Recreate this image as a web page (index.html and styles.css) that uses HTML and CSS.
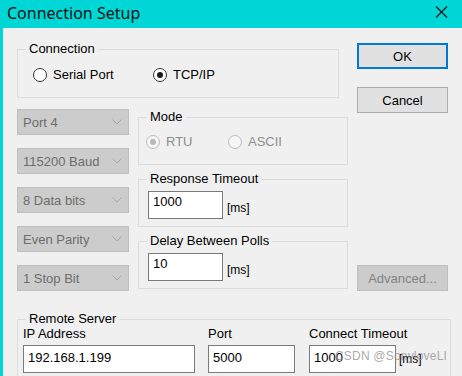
FILE: index.html
```html
<!DOCTYPE html>
<html lang="en">
<head>
    <meta charset="UTF-8">
    <title>Connection Setup</title>
    <link rel="stylesheet" href="styles.css">
</head>
<body>
    <div class="window">
        <!-- title bar -->
        <div class="titlebar">
            <span class="title">Connection Setup</span>
            <svg class="close" width="13" height="12" viewBox="0 0 13 12">
                <path d="M1 0.5 L12 11.5 M12 0.5 L1 11.5" stroke="#111" stroke-width="1.1" fill="none"/>
            </svg>
        </div>

        <div class="dialog">
            <div class="top">
                <div class="main">
                    <fieldset class="group group-connection">
                        <legend>Connection</legend>
                        <div class="radio-row">
                            <span class="radio-item item-serial"><span class="radio"></span>Serial Port</span>
                            <span class="radio-item"><span class="radio checked"></span>TCP/IP</span>
                        </div>
                    </fieldset>

                    <div class="settings">
                        <!-- serial options (disabled) -->
                        <div class="combos">
                            <div class="combo">Port 4<svg class="chevron" width="10" height="6" viewBox="0 0 10 6"><path d="M0.5 0.5 L5 5 L9.5 0.5" stroke="#a6a6a6" fill="none"/></svg></div>
                            <div class="combo">115200 Baud<svg class="chevron" width="10" height="6" viewBox="0 0 10 6"><path d="M0.5 0.5 L5 5 L9.5 0.5" stroke="#a6a6a6" fill="none"/></svg></div>
                            <div class="combo">8 Data bits<svg class="chevron" width="10" height="6" viewBox="0 0 10 6"><path d="M0.5 0.5 L5 5 L9.5 0.5" stroke="#a6a6a6" fill="none"/></svg></div>
                            <div class="combo">Even Parity<svg class="chevron" width="10" height="6" viewBox="0 0 10 6"><path d="M0.5 0.5 L5 5 L9.5 0.5" stroke="#a6a6a6" fill="none"/></svg></div>
                            <div class="combo">1 Stop Bit<svg class="chevron" width="10" height="6" viewBox="0 0 10 6"><path d="M0.5 0.5 L5 5 L9.5 0.5" stroke="#a6a6a6" fill="none"/></svg></div>
                        </div>

                        <div class="groups">
                            <fieldset class="group group-mode">
                                <legend>Mode</legend>
                                <div class="radio-row">
                                    <span class="radio-item item-rtu disabled"><span class="radio checked"></span>RTU</span>
                                    <span class="radio-item disabled"><span class="radio"></span>ASCII</span>
                                </div>
                            </fieldset>

                            <fieldset class="group group-field">
                                <legend>Response Timeout</legend>
                                <div class="field-row">
                                    <div class="edit edit-small">1000</div>
                                    <span class="unit">[ms]</span>
                                </div>
                            </fieldset>

                            <fieldset class="group group-field">
                                <legend>Delay Between Polls</legend>
                                <div class="field-row">
                                    <div class="edit edit-small">10</div>
                                    <span class="unit">[ms]</span>
                                </div>
                            </fieldset>
                        </div>
                    </div>
                </div>

                <!-- dialog buttons -->
                <div class="side">
                    <button class="btn btn-default">OK</button>
                    <button class="btn btn-cancel">Cancel</button>
                    <button class="btn btn-advanced" disabled>Advanced...</button>
                </div>
            </div>

            <fieldset class="group group-remote">
                <legend>Remote Server</legend>
                <div class="remote-grid">
                    <div class="remote-field">
                        <span class="field-label">IP Address</span>
                        <div class="edit edit-ip">192.168.1.199</div>
                    </div>
                    <div class="remote-field">
                        <span class="field-label">Port</span>
                        <div class="edit edit-port">5000</div>
                    </div>
                    <div class="remote-field">
                        <span class="field-label">Connect Timeout</span>
                        <div class="field-row">
                            <div class="edit edit-port">1000</div>
                            <span class="unit">[ms]</span>
                        </div>
                    </div>
                </div>
            </fieldset>
        </div>

        <div class="watermark">CSDN @SonyloveLI</div>
    </div>
</body>
</html>
```

FILE: styles.css
```css
body {
    margin: 0;
    font-family: "Liberation Sans", Arial, sans-serif;
    font-size: 13px;
    color: #000;
}

.window {
    position: relative;
    width: 462px;
    height: 376px;
    overflow: hidden;
    background: #f0f0f0;
}

.titlebar {
    height: 28px;
    background: #00d6d6;
    display: flex;
    align-items: center;
    justify-content: space-between;
    padding: 0 14px 0 7px;
    box-sizing: border-box;
}

.title {
    font-family: "Noto Sans", "Open Sans", sans-serif;
    font-size: 16px;
    line-height: 20px;
    color: #111;
    margin-top: -3px;
}

.close {
    display: block;
    margin-top: -4px;
}

.dialog {
    height: 348px;
    border-left: 3px solid #00d6d6;
    padding: 14px 0 0 14px;
    box-sizing: border-box;
}

.top {
    display: flex;
    gap: 9px;
}

.main {
    width: 331px;
}

/* group boxes */
.group {
    margin: 0;
    padding: 0;
    border: 1px solid #dcdcdc;
    box-sizing: border-box;
    min-width: 0;
}

.group legend {
    padding: 0 3px;
    margin-left: 8px;
    line-height: 14px;
    color: #000;
}

.group-connection {
    width: 322px;
    height: 56px;
}

.group-connection .radio-row {
    margin-top: 11px;
    padding-left: 15px;
}

.radio-row {
    display: flex;
    align-items: center;
}

.radio-item {
    display: flex;
    align-items: center;
    line-height: 15px;
}

.item-serial {
    width: 120px;
}

.radio {
    width: 14px;
    height: 14px;
    box-sizing: border-box;
    border: 1px solid #333;
    border-radius: 50%;
    background: #fff;
    margin-right: 6px;
    display: flex;
    align-items: center;
    justify-content: center;
}

.radio.checked::after {
    content: "";
    width: 6px;
    height: 6px;
    border-radius: 50%;
    background: #1a1a1a;
}

.radio-item.disabled {
    color: #8d8d8d;
}

.radio-item.disabled .radio {
    border-color: #bcbcbc;
    background: #f6f6f6;
}

.radio-item.disabled .radio.checked::after {
    background: #b8b8b8;
}

.settings {
    display: flex;
    gap: 9px;
    margin-top: 11px;
}

.combos {
    width: 112px;
    display: flex;
    flex-direction: column;
    gap: 13px;
}

.combo {
    height: 26px;
    box-sizing: border-box;
    background: #cccccc;
    border: 1px solid #bfbfbf;
    color: #6d6d6d;
    display: flex;
    align-items: center;
    justify-content: space-between;
    padding: 0 6px 0 5px;
}

.chevron {
    display: block;
}

.groups {
    width: 210px;
    margin-top: 1px;
    display: flex;
    flex-direction: column;
    gap: 7px;
}

.group-mode,
.group-field {
    height: 55px;
}

.group-mode .radio-row {
    margin-top: 10px;
    padding-left: 7px;
}

.item-rtu {
    width: 82px;
}

.group-field .field-row {
    margin-top: 5px;
    padding-left: 9px;
}

.field-row {
    display: flex;
    align-items: center;
}

.edit {
    height: 28px;
    box-sizing: border-box;
    background: #fff;
    border: 1px solid #7a7a7a;
    padding: 4px 4px;
    line-height: 16px;
}

.edit-small {
    width: 75px;
    padding-top: 2px;
}

.unit {
    font-size: 12px;
    margin-left: 4px;
    margin-top: 6px;
}

/* buttons on the right */
.side {
    width: 91px;
    display: flex;
    flex-direction: column;
    padding-top: 1px;
}

.btn {
    height: 26px;
    width: 91px;
    box-sizing: border-box;
    background: #e1e1e1;
    border: 1px solid #adadad;
    font-family: "Liberation Sans", Arial, sans-serif;
    font-size: 13px;
    color: #000;
    padding: 0;
}

.btn-default {
    border-color: #0078d7;
    box-shadow: inset 0 0 0 1px #0078d7;
}

.btn-cancel {
    margin-top: 18px;
}

.btn-advanced {
    margin-top: auto;
    background: #cccccc;
    border-color: #bfbfbf;
    color: #838383;
}

/* remote server */
.group-remote {
    width: 434px;
    height: 90px;
    margin-top: 21px;
}

.remote-grid {
    display: grid;
    grid-template-columns: 172px 88px auto;
    column-gap: 13px;
    padding: 1px 0 0 5px;
}

.remote-field {
    display: flex;
    flex-direction: column;
    align-items: flex-start;
}

.field-label {
    line-height: 14px;
    margin-bottom: 4px;
}

.edit-ip {
    width: 172px;
}

.edit-port {
    width: 87px;
}

.remote-field .unit {
    margin-left: 3px;
    margin-top: 0;
}

.watermark {
    position: absolute;
    left: 335px;
    top: 348px;
    font-size: 12px;
    line-height: 16px;
    color: rgba(140, 140, 140, 0.75);
    letter-spacing: 0.2px;
}
```
